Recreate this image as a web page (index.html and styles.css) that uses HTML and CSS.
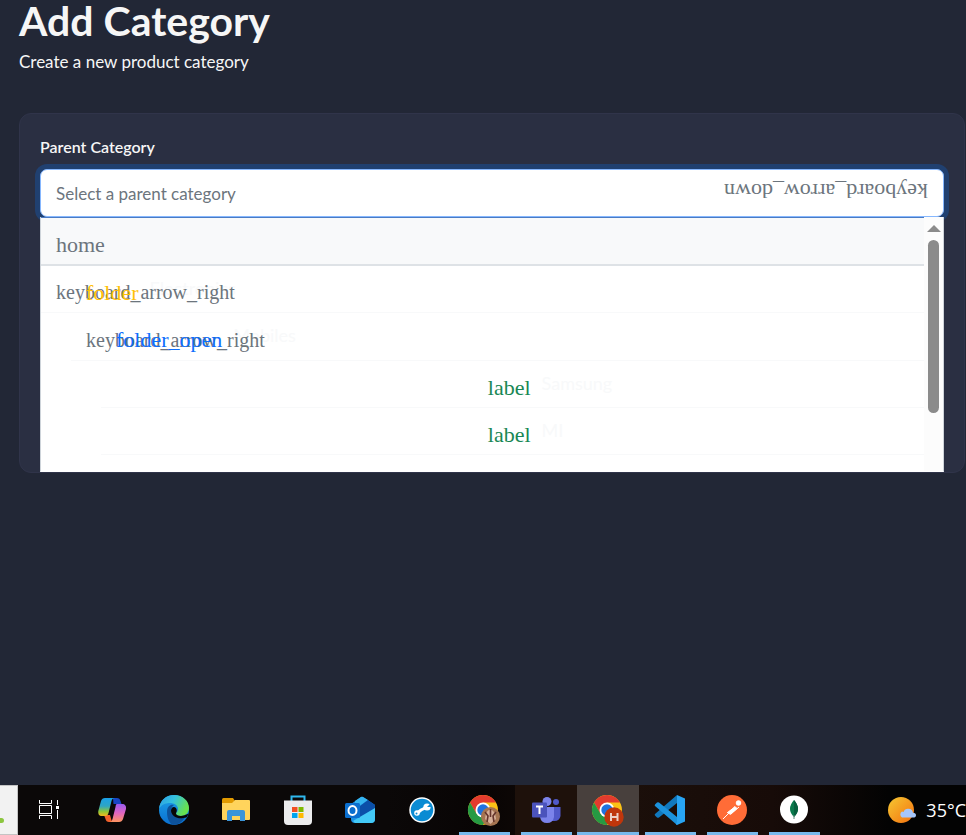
FILE: index.html
```html
<!DOCTYPE html>
<html lang="en">
<head>
<meta charset="utf-8">
<title>Add Category</title>
<link rel="stylesheet" href="styles.css">
</head>
<body>
<main class="page">
  <h1 class="title">Add Category</h1>
  <p class="subtitle">Create a new product category</p>
  <section class="card">
    <label class="label" for="parent">Parent Category</label>
    <button class="field" id="parent" type="button" aria-expanded="true">
      <span>Select a parent category</span>
      <span class="icon flipped">keyboard_arrow_down</span>
    </button>
    <div class="dropdown">
      <div class="tree">
        <div class="row root"><span class="icon">home</span></div>
        <div class="row"><button class="toggle" type="button">keyboard_arrow_right</button><span class="icon folder">folder</span><span class="name">Electronics</span></div>
        <div class="row level-1"><button class="toggle" type="button">keyboard_arrow_right</button><span class="icon open">folder_open</span><span class="name">Mobiles</span></div>
        <div class="row level-2"><span class="spacer"></span><span class="icon leaf">label</span><span class="name">Samsung</span></div>
        <div class="row level-2"><span class="spacer"></span><span class="icon leaf">label</span><span class="name">MI</span></div>
      </div>
      <div class="scrollbar"><span class="arrow"></span><span class="thumb"></span></div>
    </div>
  </section>
</main>
<footer class="taskbar">
  <div class="search"><span class="dot"></span></div>
  <div class="task">
    <svg width="30" height="30" viewBox="0 0 30 30" fill="none" stroke="#fff" stroke-width="1"><path d="M4.500 5v3.500h12V5M4.500 24v-3.500h12V24M4.500 10.500h12v8h-12zM22.500 5v5M22.500 15v9"/><path d="M21 11h3v3h-3z" fill="#fff" stroke="none"/></svg>
  </div>
  <div class="task">
    <svg width="30" height="30" viewBox="0 0 30 30"><defs><linearGradient id="c1" x1="0" y1="0" x2="0" y2="1"><stop offset="0" stop-color="#1aa0e8"/><stop offset=".45" stop-color="#2ea5c4"/><stop offset=".75" stop-color="#8fc63a"/><stop offset="1" stop-color="#f5b91c"/></linearGradient><linearGradient id="c2" x1="0" y1="0" x2="0" y2="1"><stop offset="0" stop-color="#9a5cf0"/><stop offset=".5" stop-color="#e065c0"/><stop offset="1" stop-color="#ff9560"/></linearGradient></defs><path d="M16 3h4c2 0 3 1 3.500 3l1 3h-8z" fill="#1745c4"/><path d="M7 20h6l2 7h-3c-2 0-3-1-3.500-3z" fill="#f2602c"/><path d="M8 3h10c-2 0-3 1-3.500 3l-3 12c-.5 2-1.500 3-3.500 3H5c-3 0-4-2-3.700-5L4 6c.7-2 2-3 4-3z" fill="url(#c1)"/><path d="M20 9h5c3 0 4.500 2 4 5L26 24c-.7 2-2 3-4 3H12c2 0 3-1 3.500-3l3-12c.3-2 .5-3 1.500-3z" fill="url(#c2)"/></svg>
  </div>
  <div class="task">
    <svg width="30" height="30" viewBox="0 0 30 30"><defs><linearGradient id="e1" x1="0" y1="0" x2="1" y2=".4"><stop offset="0" stop-color="#2a9be6"/><stop offset=".5" stop-color="#35c1dd"/><stop offset="1" stop-color="#67e24f"/></linearGradient><linearGradient id="e2" x1="0" y1="0" x2="0" y2="1"><stop offset="0" stop-color="#1da2e8"/><stop offset="1" stop-color="#0a6fd0"/></linearGradient></defs><circle cx="15" cy="15" r="15" fill="url(#e2)"/><path d="M8 17c0-6 4-8 7-7-4 2-4 10 4 11 4 .5 7-2 8.500-2C25 26 20 30 14 29.900 10 28 8 23 8 17z" fill="#0d529b"/><path d="M0 14C1 5 7 0 15 0c9 0 15 6 15 13 0 5-4 8-8 8-3 0-5-1-5-2.500 0-1 2-1.500 2-4.500 0-4-4-6-8-6C6 8 2 10 0 14z" fill="url(#e1)"/><path d="M17 18.500c0 2 4 3 8 2l5-2-2.500 4-3.500.5c-5 1-11-1-12-7 0-2 1-4 3-4 2 0 3.500 3 2.500 5-.3.600-.5 1-.5 1.500z" fill="#080606"/></svg>
  </div>
  <div class="task">
    <svg width="30" height="30" viewBox="0 0 30 30"><path d="M1 4.500Q1 3 2.500 3H12l2 3v4H1z" fill="#e29a00"/><path d="M1 8h10l3-3h14q1 0 1 1v18q0 1-1 1H2q-1 0-1-1z" fill="#ffd45c"/><path d="M6 26V17q0-2 2-2h14q2 0 2 2v9h-5v-5h-8v5z" fill="#3b95da"/></svg>
  </div>
  <div class="task">
    <svg width="30" height="30" viewBox="0 0 30 30"><path d="M8.500 7V1.500h13V7" fill="none" stroke="#2fb8ee" stroke-width="2"/><path d="M1 5.500h28V26q0 4-4 4H5q-4 0-4-4z" fill="#ececed"/><path d="M9 12h5.500v5H9z" fill="#f25022"/><path d="M15.500 12h5v5h-5z" fill="#7fba00"/><path d="M9 18h5.500v5H9z" fill="#00a4ef"/><path d="M15.500 18h5v5h-5z" fill="#ffb900"/></svg>
  </div>
  <div class="task">
    <svg width="30" height="30" viewBox="0 0 30 30"><path d="M6 9 16 2q1-.6 2 0l12 8v14q0 4-4 4H10q-4 0-4-4z" fill="#1b91e4"/><path d="M10 6l6-4q1-.6 2 0l5 3-13 9z" fill="#35b4f0"/><path d="M23 5l7 5v4L15 23V11z" fill="#0b4fa8"/><path d="M30 13v11q0 4-4 4H10l-2-2z" fill="#43c9f6"/><rect y="8" width="15" height="15" rx="1.500" fill="#0b6fcf"/><ellipse cx="7.500" cy="15.500" rx="4" ry="4.500" fill="none" stroke="#fff" stroke-width="2"/></svg>
  </div>
  <div class="task">
    <svg width="30" height="30" viewBox="0 0 30 30"><circle cx="15" cy="15" r="12" fill="#0a8bd3" stroke="#fff" stroke-width="1.500"/><path d="M9 19l5-4 2-1 5-3" stroke="#fff" stroke-width="3"/><circle cx="10" cy="18" r="2.800" fill="#fff"/><circle cx="20" cy="12" r="3.600" fill="#fff"/><path d="M20 12l4-4 1 4z" fill="#0a8bd3"/><circle cx="9.500" cy="18.500" r="1" fill="#0a8bd3"/></svg>
  </div>
  <div class="task running">
    <svg width="32" height="34" viewBox="0 0 32 34"><use href="#chrome"/><circle cx="22.500" cy="23.500" r="9.500" fill="#a57451"/><path d="M18 20q4-7 9 0l1 6-5.500 5-5.500-5z" fill="#d7b09a"/><path d="M17 19l3 4-1 6M28 19l-3 4 1 6M22.500 16v8" stroke="#65352c" stroke-width="1.600" fill="none"/></svg>
  </div>
  <div class="task running warm">
    <svg width="30" height="30" viewBox="0 0 30 30"><circle cx="16" cy="6.500" r="4.500" fill="#7b83eb"/><circle cx="25" cy="7" r="3" fill="#5059c9"/><path d="M20 12h9.500v9q-1 5-6 5H20z" fill="#5059c9"/><path d="M9 12h14v10q-1 6-7 6t-7-6z" fill="#7b83eb"/><rect x="1" y="7.500" width="15" height="15" rx="1" fill="#4b53bc"/><path d="M5 11.500h7M8.500 11.500V19" stroke="#fff" stroke-width="2"/></svg>
  </div>
  <div class="task running active">
    <svg width="32" height="34" viewBox="0 0 32 34"><g id="chrome"><circle cx="15" cy="17" r="15" fill="#fbc116"/><path d="M2 9.500a15 15 0 0 1 26 0H15L8.500 21z" fill="#e33b2e"/><path d="M2 9.500a15 15 0 0 0 13 22.500l6.500-11.300H8.500z" fill="#269a43"/><circle cx="15" cy="17" r="7.500" fill="#fff"/><circle cx="15" cy="17" r="5.700" fill="#1f73e0"/></g><circle cx="22" cy="24" r="9.700" fill="#bf360c"/><path d="M19 20v8M25.500 20v8M19 24h6.500" stroke="#eccfc5" stroke-width="2"/></svg>
  </div>
  <div class="task running">
    <svg width="30" height="30" viewBox="0 0 30 30"><path d="M22 0v8L4 22.500q-1 .5-2 0l-2-2q-.6-1 0-1.500z" fill="#1178bd"/><path d="M22 30v-8L4 7.500q-1-.5-2 0l-2 2q-.6 1 0 1.500z" fill="#1c92dc"/><path d="M22 0l8 3.500v23L22 30q-.5 0-1-1l1-2z" fill="#28a4f3"/></svg>
  </div>
  <div class="task running">
    <svg width="30" height="30" viewBox="0 0 30 30"><circle cx="15" cy="15" r="15" fill="#ff6c37"/><g stroke="#fff" fill="#fff"><circle cx="21.500" cy="8" r="2.300"/><path d="M18 11.500l2 2-7 6-2-2z"/><path d="M12 18l-6 6M14 15l-4 3M22 12l-8 7" fill="none"/></g></svg>
  </div>
  <div class="task running">
    <svg width="30" height="30" viewBox="0 0 30 30"><circle cx="15" cy="14.500" r="14" fill="#fff"/><path d="M15 5q8 9 0 17-8-8 0-17z" fill="#0a7a4d"/><path d="M15 5q8 9 0 17z" fill="#07603e"/><path d="M15 20v4" stroke="#5f8b7c"/></svg>
  </div>
  <div class="weather">
    <svg width="28" height="28" viewBox="0 0 28 28"><defs><linearGradient id="s" x1="0" y1="0" x2="1" y2="1"><stop offset="0" stop-color="#f5c832"/><stop offset="1" stop-color="#f4700f"/></linearGradient></defs><circle cx="13" cy="14" r="13" fill="url(#s)"/><path d="M14 21.500a3.500 3.500 0 0 1 0-6q1 0 1.500.4a5 5 0 0 1 9.500.8q3 .2 3 2.500t-3 2.300z" fill="#a6c6fa"/></svg>
    <span>35°C</span>
  </div>
</footer>
</body>
</html>
```
FILE: styles.css
```css
* { box-sizing: border-box; }

body {
  margin: 0;
  min-height: 100vh;
  display: flex;
  flex-direction: column;
  overflow-x: hidden;
  background: #222736;
  color: #f6f6f6;
  font-family: Lato, sans-serif;
  font-size: 17px;
}

button { font: inherit; margin: 0; border: 0; background: none; text-align: left; }

.page { flex: 1; padding: 0 1px 0 19px; }

.title { margin: 0; font-size: 41px; line-height: 42px; font-weight: 700; }

.subtitle { margin: 8px 0 39px; line-height: 24px; }

.card {
  padding: 20px 20px 0;
  border: 1px solid #30344a;
  border-radius: 12px;
  background: #2a2f42;
}

.label { display: block; margin-bottom: 9px; font-size: 16px; line-height: 26px; font-weight: 600; }

.field {
  display: flex;
  justify-content: space-between;
  align-items: center;
  width: 100%;
  height: 48px;
  padding: 0 15px;
  border: 1px solid #86b7fe;
  border-radius: 7px;
  background: #fff;
  box-shadow: 0 0 0 5px #204070;
  color: #6c757d;
}

.icon { font-family: "Liberation Serif", serif; font-size: 22px; line-height: 26px; color: #6c757d; }
.flipped { transform: rotate(180deg); padding-top: 4px; }

.dropdown {
  position: relative;
  display: flex;
  height: 255px;
  border: 1px solid #ced4da;
  border-top: 0;
  border-bottom-color: #fff;
  background: #fff;
}

.tree { flex: 1; overflow: hidden; border-top: 1px solid #4a7bc4; }

.row {
  display: flex;
  align-items: center;
  height: 47px;
  padding-left: 15px;
  border-bottom: 1px solid #f8f9fa;
}
.row .icon { padding-top: 7px; z-index: 2; }
.root { height: 48px; background: #f8f9fa; border-bottom: 2px solid #dee2e6; }
.level-1 { margin-left: 30px; height: 48px; }
.level-2 { margin-left: 60px; padding-left: 0; }

.toggle {
  z-index: 1;
  flex: 0 0 30px;
  width: 30px;
  padding: 6px 0 0;
  font-family: "Liberation Serif", serif;
  font-size: 20px;
  line-height: 26px;
  white-space: nowrap;
  color: #6c757d;
}

.icon.folder { color: #ffc107; }
.icon.open { color: #0d6efd; }
.icon.leaf { color: #198754; }
.name { margin-left: 11px; padding-bottom: 3px; font-size: 18px; color: #f8f9fa; }
.spacer { flex: 0 0 47%; }

.scrollbar {
  display: flex;
  flex-direction: column;
  align-items: center;
  width: 19px;
  padding-top: 8px;
  background: #fcfcfc;
}
.arrow { border: 7px solid transparent; border-top: 0; border-bottom-color: #8b8b8b; }
.thumb { width: 11px; height: 173px; margin-top: 8px; border-radius: 6px; background: #8b8b8b; }

.taskbar { display: flex; height: 50px; background: linear-gradient(90deg, #0b0808 0 40%, #080404 50%, #1b0f0a 65%, #170b08 80%, #030303 92%); }

.search { display: flex; align-items: flex-end; width: 18px; margin-right: 1px; padding-bottom: 11px; border: 1px solid #c4c4c4; border-left: 0; background: #f2f2f2; }
.dot { width: 4px; height: 5px; border-radius: 0 3px 3px 0; background: #8cc63f; }

.task { display: flex; align-items: center; justify-content: center; flex: 0 0 62px; }
.task svg { overflow: visible; }
.running {
  background: linear-gradient(#76b9ed, #76b9ed) center bottom / 51px 3px no-repeat;
}
.warm { background-color: #1e110b; }
.active { background-color: #48403d; background-size: 100% 3px; }

.weather {
  display: flex;
  align-items: center;
  gap: 10px;
  margin-left: auto;
  font-family: "Open Sans", sans-serif;
  font-size: 18px;
  color: #fff;
}
```
